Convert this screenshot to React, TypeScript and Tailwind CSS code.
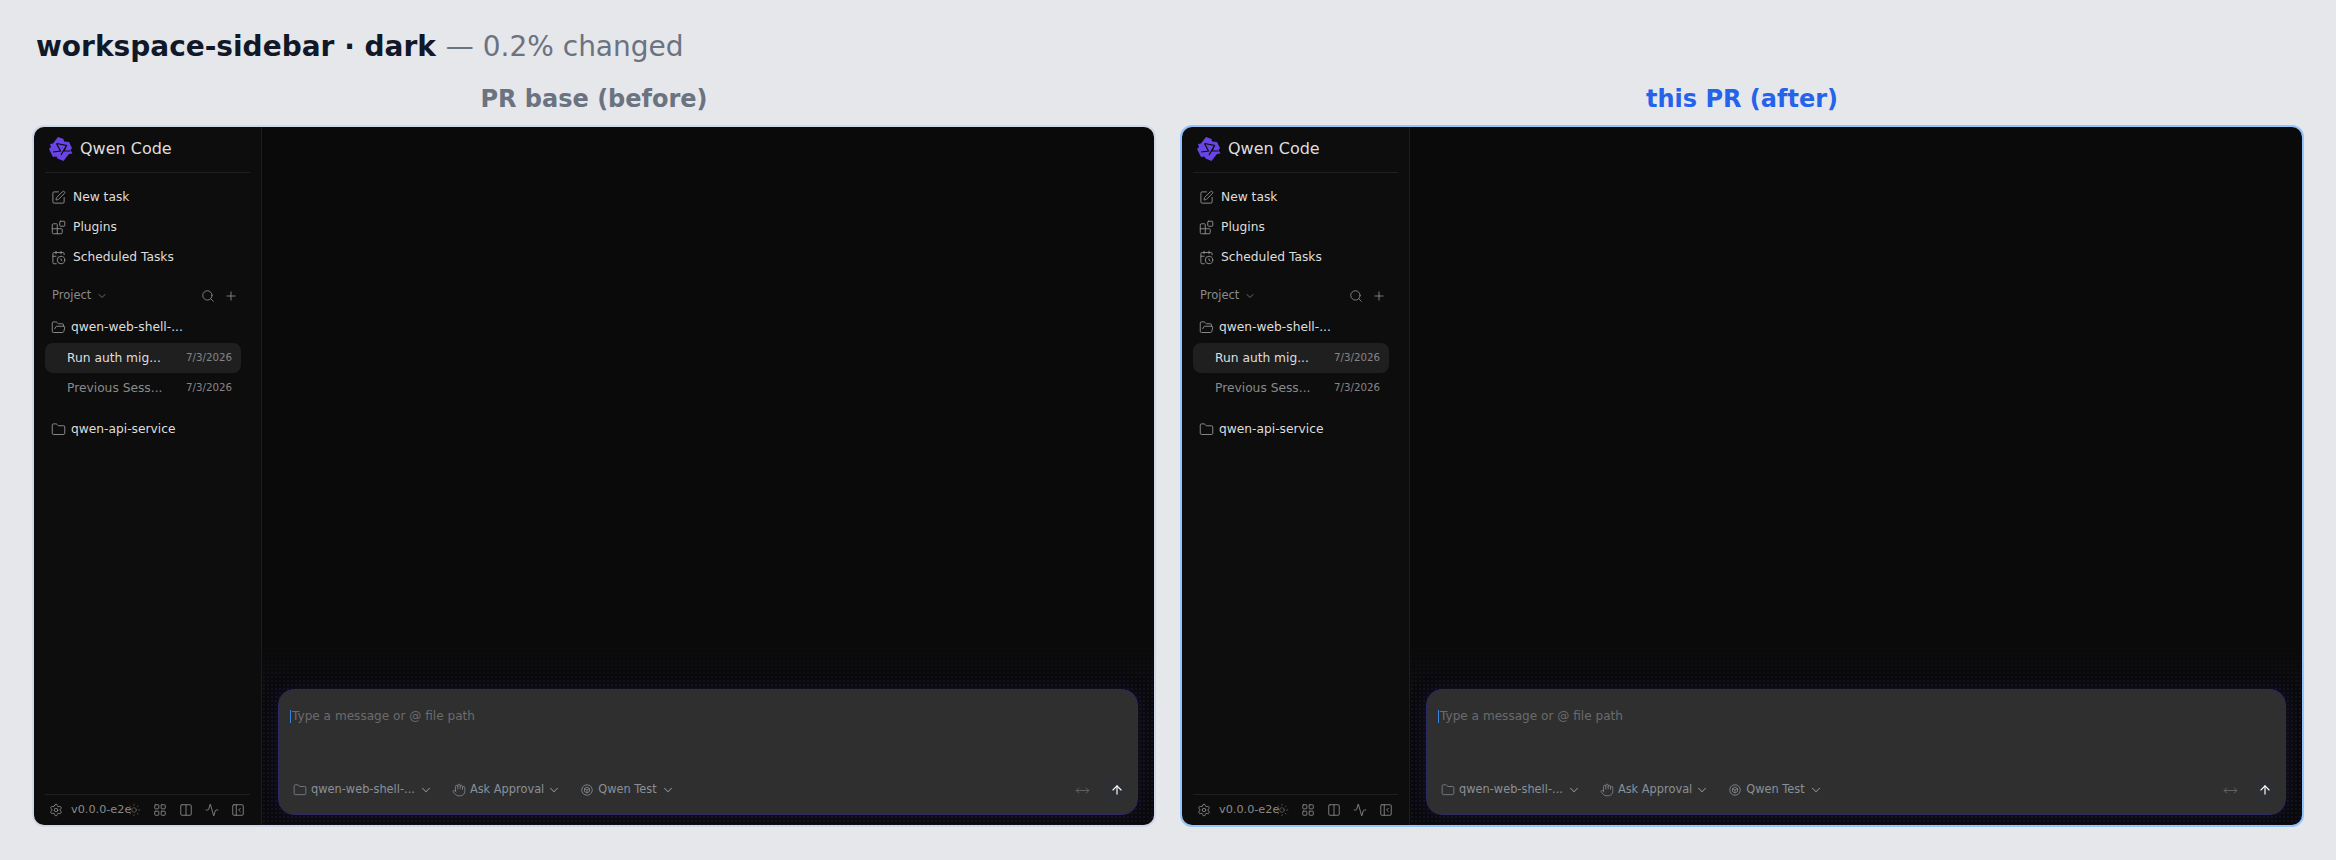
import { Activity, ArrowUp, Blocks, CalendarClock, ChevronDown, Columns2, Folder, FolderOpen, Hand, LayoutGrid, MoveHorizontal, PanelLeftClose, Plus, Search, Settings, SquarePen, Sun } from "lucide-react";

function QwenLogo() {
  return (
    <svg viewBox="0 0 24 24" className="h-[24px] w-[24px] shrink-0">
      <path fill="#6a45e6" d="M9 0l5.500 2 .5 2.500L20 5l3 6-1.500 2 2 3.500-3.500.5-2.500 3-3 4-6-2.500-1-2L4 20 0 12l2-2-1-3 3-.5z" />
      <path fill="none" stroke="#0d0d0d" strokeWidth="1.2" d="M7.500 6.500l10 2-5.500 9.500M17.500 8.500L15 14h6.500M7.500 6.500l4 7.500-7.500 1" />
    </svg>
  );
}

function ModelIcon() {
  return (
    <svg viewBox="0 0 24 24" fill="none" stroke="currentColor" strokeWidth="1.6" className="h-[12px] w-[12px] shrink-0">
      <circle cx="12" cy="12" r="10.500" />
      <path d="M12 6l5 3v6l-5 3-5-3V9zM7 9l5 3 5-3M12 12v6" />
    </svg>
  );
}

function NavItem({ icon: Icon, label }: { icon: typeof Plus; label: string }) {
  return (
    <div className="flex h-[30px] items-center gap-[7px] pl-[6px] text-[12.250px] text-[#dedede]">
      <Icon size={15} strokeWidth={1.5} className="shrink-0 text-[#8f8f8f]" />
      <span>{label}</span>
    </div>
  );
}

function SessionRow({ title, active }: { title: string; active?: boolean }) {
  return (
    <div className={`flex h-[30px] items-center justify-between rounded-[8px] pl-[22px] pr-[9px] ${active ? "bg-[#1f1f1f] text-[#dedede]" : "text-[#8a8a8a]"}`}>
      <span className="text-[12.250px]">{title}</span>
      <span className="text-[10.250px] text-[#858585]">7/3/2026</span>
    </div>
  );
}

function Sidebar() {
  return (
    <aside className="flex w-[228px] shrink-0 flex-col border-r border-[#1d1d1d] bg-[#0d0d0d] px-[11px]">
      <div className="flex h-[46px] shrink-0 items-center gap-[7px] border-b border-[#1f1f1f] pb-[1px] pl-[4px] text-[16px] text-[#dedede]">
        <QwenLogo />
        <span>Qwen Code</span>
      </div>
      <div className="pt-[9px]">
        <NavItem icon={SquarePen} label="New task" />
        <NavItem icon={Blocks} label="Plugins" />
        <NavItem icon={CalendarClock} label="Scheduled Tasks" />
      </div>
      <div className="mt-[9px] flex h-[30px] items-center pl-[7px] pr-[12px] text-[#8a8a8a]">
        <span className="text-[11.500px]">Project</span>
        <ChevronDown size={12} strokeWidth={1.5} className="ml-[5px]" />
        <Search size={14} strokeWidth={1.5} className="ml-auto" />
        <Plus size={14} strokeWidth={1.5} className="ml-[9px]" />
      </div>
      <div className="flex h-[32px] items-center gap-[5px] pl-[6px] text-[12.250px] text-[#dedede]">
        <FolderOpen size={15} strokeWidth={1.5} className="shrink-0 text-[#8f8f8f]" />
        <span>qwen-web-shell-...</span>
      </div>
      <div className="w-[196px]">
        <SessionRow title="Run auth mig..." active />
        <SessionRow title="Previous Sess..." />
      </div>
      <div className="mt-[10px] flex h-[32px] items-center gap-[5px] pl-[6px] text-[12.250px] text-[#dedede]">
        <Folder size={15} strokeWidth={1.5} className="shrink-0 text-[#8f8f8f]" />
        <span>qwen-api-service</span>
      </div>
      <div className="mt-auto flex h-[31px] shrink-0 items-center border-t border-[#1f1f1f] pl-[4px] pr-[5px] text-[#8a8a8a]">
        <Settings size={14} strokeWidth={1.5} className="shrink-0" />
        <span className="ml-[8px] w-[56px] shrink-0 whitespace-nowrap text-[11.250px] leading-none">v0.0.0-e2e</span>
        <Sun size={14} strokeWidth={1} className="shrink-0 text-[#7a7a7a]" />
        <div className="ml-auto flex items-center gap-[12px]">
          <LayoutGrid size={14} strokeWidth={1.5} />
          <Columns2 size={14} strokeWidth={1.5} />
          <Activity size={14} strokeWidth={1.5} />
          <PanelLeftClose size={14} strokeWidth={1.5} />
        </div>
      </div>
    </aside>
  );
}

function Composer() {
  return (
    <div className="relative">
      {/* dotted glow behind the input */}
      <div className="absolute -inset-x-[16px] -bottom-[10px] -top-[50px] bg-[radial-gradient(rgba(80,70,210,0.13)_1px,transparent_1px)] bg-[size:4px_4px] [mask-image:linear-gradient(to_top,black_72%,transparent)]" />
      <div className="relative flex h-[126px] flex-col rounded-[16px] border border-[#2c2a5e] bg-[#2f2f2f] pl-[11px] pr-[8px] shadow-[0_0_20px_rgba(50,45,150,0.16)]">
        <div className="flex items-center pt-[17px] text-[12.100px] leading-[18px] text-[#6b6b6b]">
          <span className="h-[13px] w-px bg-[#3f83d8]" />
          <span className="-ml-px pl-[2px]">Type a message or @ file path</span>
        </div>
        <div className="mt-auto mb-[12px] flex h-[24px] items-center text-[11.380px] text-[#8a8f98]">
          <Folder size={14} strokeWidth={1.25} className="ml-[3px] shrink-0" />
          <span className="ml-[4px]">qwen-web-shell-...</span>
          <ChevronDown size={14} strokeWidth={1.75} className="ml-[4px]" />
          <Hand size={14} strokeWidth={1.25} className="ml-[19px]" />
          <span className="ml-[4px]">Ask Approval</span>
          <ChevronDown size={14} strokeWidth={1.75} className="ml-[3px]" />
          <span className="ml-[20px]"><ModelIcon /></span>
          <span className="ml-[5px]">Qwen Test</span>
          <ChevronDown size={14} strokeWidth={1.75} className="ml-[4px]" />
          <MoveHorizontal size={15} strokeWidth={1.25} className="ml-auto text-[#6f6f6f]" />
          <div className="ml-[15px] flex h-[24px] w-[24px] items-center justify-center rounded-[8px] bg-[#2d2f33] text-white">
            <ArrowUp size={14} strokeWidth={2} />
          </div>
        </div>
      </div>
    </div>
  );
}

function Panel({ label, after }: { label: string; after?: boolean }) {
  return (
    <div className="w-[1124px]">
      <div className={`mb-[10px] text-center text-[24px] font-bold leading-[32px] ${after ? "text-[#2563eb]" : "text-[#6b7280]"}`}>{label}</div>
      <div className={`flex h-[702px] overflow-hidden rounded-[12px] border-2 ${after ? "border-[#93c5fd]" : "border-[#d1d9e6]"}`}>
        <Sidebar />
        <main className="flex min-w-0 flex-1 flex-col justify-end bg-[#0a0a0a] px-[16px] pb-[10px]">
          <Composer />
        </main>
      </div>
    </div>
  );
}

export default function App() {
  return (
    <div className="h-[860px] bg-[#e5e7eb] pl-[32px] pt-[25px] font-['DejaVu_Sans',sans-serif]">
      <div className="mb-[14px] pl-[4px] text-[28px] leading-[44px] text-[#6b7280]">
        <span className="font-bold text-[#111827]">workspace-sidebar · dark</span> <span className="ml-px">— 0.2% changed</span>
      </div>
      <div className="flex gap-[24px]">
        <Panel label="PR base (before)" />
        <Panel label="this PR (after)" after />
      </div>
    </div>
  );
}
